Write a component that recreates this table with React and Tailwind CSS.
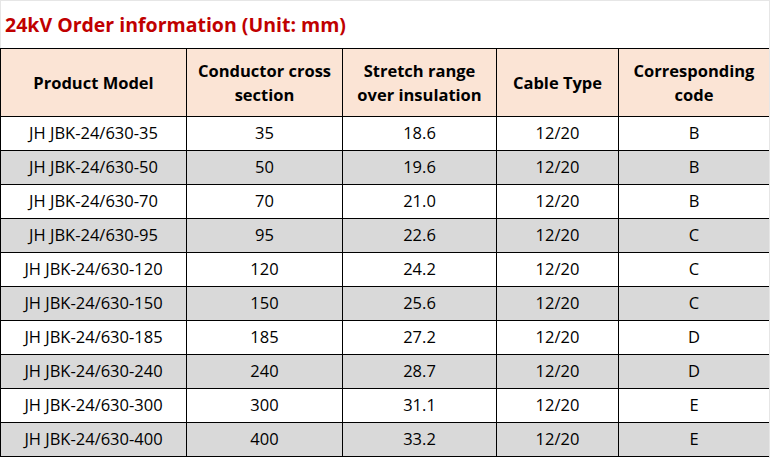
import React from "react";

const rows = [
  ["JH JBK-24/630-35", "35", "18.6", "12/20", "B"],
  ["JH JBK-24/630-50", "50", "19.6", "12/20", "B"],
  ["JH JBK-24/630-70", "70", "21.0", "12/20", "B"],
  ["JH JBK-24/630-95", "95", "22.6", "12/20", "C"],
  ["JH JBK-24/630-120", "120", "24.2", "12/20", "C"],
  ["JH JBK-24/630-150", "150", "25.6", "12/20", "C"],
  ["JH JBK-24/630-185", "185", "27.2", "12/20", "D"],
  ["JH JBK-24/630-240", "240", "28.7", "12/20", "D"],
  ["JH JBK-24/630-300", "300", "31.1", "12/20", "E"],
  ["JH JBK-24/630-400", "400", "33.2", "12/20", "E"],
];

export default function App() {
  return (
    <div
      className="w-[770px] h-[458px] bg-white border-t border-r border-[#e6e6e6] overflow-hidden"
      style={{ fontFamily: '"Open Sans", "Noto Sans", sans-serif' }}
    >
      <div className="h-[47px] border-l border-[#e6e6e6] flex items-center pl-[4px] pt-[1px]">
        <span className="text-[19.5px] font-bold text-[#c00000] leading-none">
          24kV Order information (Unit: mm)
        </span>
      </div>
      <table className="border-collapse table-fixed w-[769px] text-black">
        <colgroup>
          <col className="w-[186px]" />
          <col className="w-[156px]" />
          <col className="w-[154px]" />
          <col className="w-[122px]" />
          <col className="w-[151px]" />
        </colgroup>
        <thead>
          <tr className="h-[68px] bg-[#fbe4d5]">
            {[
              "Product Model",
              <>Conductor cross<br />section</>,
              <>Stretch range<br />over insulation</>,
              "Cable Type",
              <>Corresponding<br />code</>,
            ].map((h, i) => (
              <th
                key={i}
                className="border border-black text-[16.5px] font-bold leading-[24px] text-center align-middle p-0"
              >
                {h}
              </th>
            ))}
          </tr>
        </thead>
        <tbody>
          {rows.map((r, i) => (
            <tr key={i} className={`h-[34px] ${i % 2 === 1 ? "bg-[#d9d9d9]" : "bg-white"}`}>
              {r.map((c, j) => (
                <td
                  key={j}
                  className="border border-black text-[16.5px] leading-none text-center align-middle p-0"
                >
                  {c}
                </td>
              ))}
            </tr>
          ))}
        </tbody>
      </table>
    </div>
  );
}
